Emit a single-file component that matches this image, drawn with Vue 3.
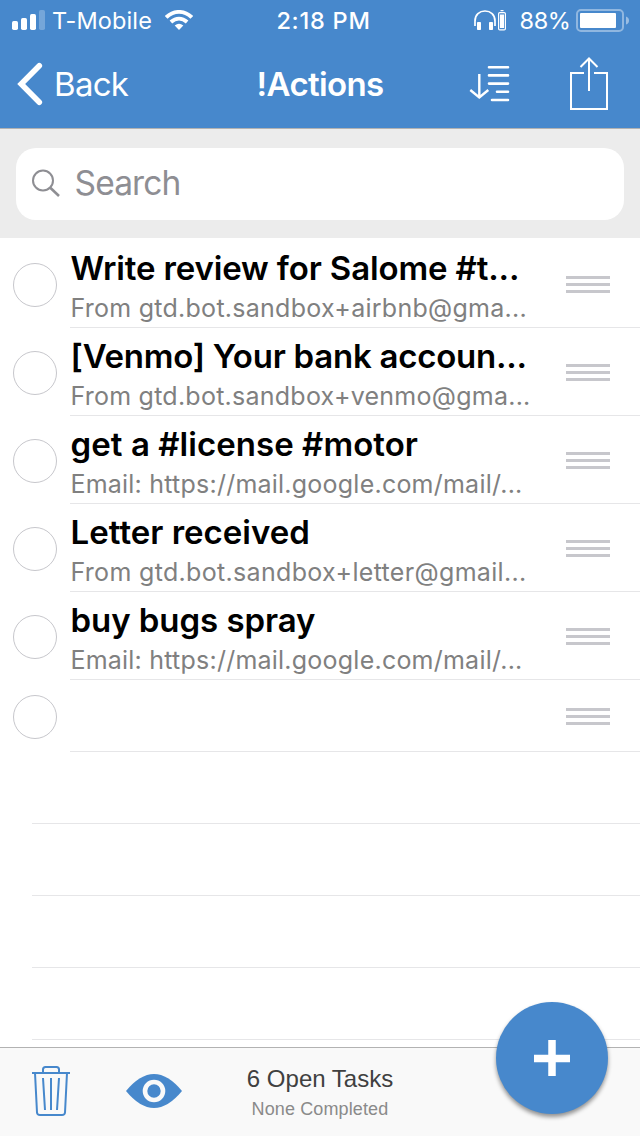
<script setup>
// ts and ns are the letter spacings of the title and the note, in pixels
const tasks = [
  { title: 'Write review for Salome #t...', note: 'From gtd.bot.sandbox+airbnb@gma...', ts: -0.14, ns: 0.27 },
  { title: '[Venmo] Your bank accoun...', note: 'From gtd.bot.sandbox+venmo@gma...', ts: -0.24, ns: 0.25 },
  { title: 'get a #license #motor', note: 'Email: https://mail.google.com/mail/...', ts: 0.05, ns: 0.23 },
  { title: 'Letter received', note: 'From gtd.bot.sandbox+letter@gmail...', ts: 0, ns: 0.33 },
  { title: 'buy bugs spray', note: 'Email: https://mail.google.com/mail/...', ts: -0.07, ns: 0.23 },
  { title: '', note: '', ts: 0, ns: 0 },
]
</script>

<template>
  <div class="screen">
    <header class="header">
      <div class="status">
        <div class="status-left">
          <svg class="signal" width="34" height="20" viewBox="0 0 34 20" fill="#fff">
            <rect x="0" y="11" width="6" height="9" rx="1.7" />
            <rect x="9" y="8" width="6" height="12" rx="1.7" />
            <rect x="18" y="4" width="6" height="16" rx="1.7" />
            <rect x="27" y="0" width="6" height="20" rx="1.7" opacity=".25" />
          </svg>
          <span class="carrier">T-Mobile</span>
          <svg class="wifi" width="28" height="20" viewBox="0 0 28 20" fill="none" stroke="#fff" stroke-width="3.9">
            <path d="M1.2 7.4Q7 1.9 14 1.9T26.8 7.4" />
            <path d="M5.900 12Q9.700 8.600 14 8.600T22.100 12" />
            <path d="M14 20L9.7 15.6Q14 11.9 18.3 15.6Z" fill="#fff" stroke="none" />
          </svg>
        </div>
        <span class="clock">2:18 PM</span>
        <div class="status-right">
          <svg class="phones" width="33" height="21" viewBox="0 0 33 21" fill="none" stroke="#fff">
            <path d="M1 16V11C1 4.500 5.500 1 11 1S21 4.500 21 11V16" stroke-width="1.700" />
            <rect x="3" y="12" width="4" height="8" rx=".8" fill="#fff" stroke="none" />
            <rect x="15" y="12" width="4" height="8" rx=".8" fill="#fff" stroke="none" />
            <rect x="24.600" y="2.600" width="6.800" height="17.300" rx="1.200" stroke-width="1.200" />
            <rect x="26" y="4.500" width="4" height="13.500" fill="#fff" stroke="none" />
            <path d="M26.500 .6H29.500" stroke-width="1.200" />
          </svg>
          <span class="percent">88%</span>
          <svg class="battery" width="54" height="24" viewBox="0 0 54 24">
            <rect x="1" y="1" width="46" height="21" rx="4" fill="none" stroke="#fff" stroke-opacity=".4" stroke-width="2" />
            <rect x="4" y="4" width="36" height="15" rx="1" fill="#fff" />
            <path d="M50 7.500Q53 8.500 53 11.500T50 15.500Z" fill="#fff" fill-opacity=".45" />
          </svg>
        </div>
      </div>
      <nav class="nav">
        <div class="back">
          <svg width="26" height="44" viewBox="0 0 26 44" fill="none" stroke="#fff" stroke-width="5.600" stroke-linecap="round" stroke-linejoin="miter">
            <path d="M22.300 3.800L4.200 22L22.300 40.200" />
          </svg>
          <span class="back-label">Back</span>
        </div>
        <h1 class="heading">!Actions</h1>
        <div class="actions">
          <svg width="42" height="40" viewBox="0 0 42 40" fill="none" stroke="#fff" stroke-width="2.600" stroke-linecap="round">
            <path d="M20 3.200H39M20 11.400H39M20 19.600H39M28 27.800H39M23 36H39" />
            <path d="M10.300 10V33M1.300 26L10.300 33.500L19.300 26" stroke-width="2.400" stroke-linecap="butt" />
          </svg>
          <svg class="share" width="40" height="56" viewBox="0 0 40 56" fill="none" stroke="#fff" stroke-width="2">
            <path d="M15 17H2V53H38V17H25" />
            <path d="M20 35V2.500M11.500 11L20 2.500L28.500 11" />
          </svg>
        </div>
      </nav>
    </header>

    <div class="search-area">
      <div class="search">
        <svg width="30" height="30" viewBox="0 0 30 30" fill="none" stroke="#8e8e93">
          <circle cx="12" cy="11.500" r="10" stroke-width="2" />
          <path d="M19 18.500L28 27" stroke-width="2.600" />
        </svg>
        <span class="placeholder">Search</span>
      </div>
    </div>

    <main class="list">
      <div v-for="(task, i) in tasks" :key="i" class="row" :class="{ blank: !task.title }">
        <span class="check"></span>
        <div class="body">
          <div class="copy">
            <div class="title"><span :style="{ letterSpacing: task.ts + 'px' }">{{ task.title }}</span></div>
            <div class="note"><span :style="{ letterSpacing: task.ns + 'px' }">{{ task.note }}</span></div>
          </div>
          <div class="grip"><i></i><i></i><i></i></div>
        </div>
      </div>
      <div v-for="n in 4" :key="'empty' + n" class="empty"></div>
    </main>

    <footer class="toolbar">
      <svg class="trash" width="38" height="51" viewBox="0 0 38 51" fill="none" stroke="#4788cc" stroke-width="2">
        <path d="M0 7H38M11 7V3.500Q11 1 13.500 1H24.500Q27 1 27 3.500V7" />
        <path d="M3 7L5 46.500Q5.200 49 8 49H30Q32.800 49 33 46.500L35 7" />
        <path d="M11 12L13 44M19 12V44M27 12L25 44" />
      </svg>
      <svg class="eye" width="56" height="34" viewBox="0 0 56 34">
        <path d="M0 17Q14 0 28 0T56 17Q42 34 28 34T0 17Z" fill="#4788cc" />
        <circle cx="28" cy="17" r="9" fill="#4788cc" stroke="#f9f9f9" stroke-width="4.600" />
      </svg>
      <div class="summary">
        <div class="open"><span>6 Open Tasks</span></div>
        <div class="completed"><span>None Completed</span></div>
      </div>
    </footer>
    <button class="add" aria-label="Add task">
      <svg width="36" height="36" viewBox="0 0 36 36" stroke="#fff" stroke-width="7.500"><path d="M0 18.500H36M18 0V36" /></svg>
    </button>
  </div>
</template>

<style>
body { margin: 0; }
</style>

<style scoped>
.screen { position: relative; width: 640px; height: 1136px; overflow: hidden; background: #fff; display: flex; flex-direction: column; font-family: Inter, "Liberation Sans", sans-serif; box-sizing: border-box; }
.header { height: 128px; background: #4788cc; border-bottom: 1px solid #b2b2b2; color: #fff; flex: none; }
.status { height: 40px; display: grid; grid-template-columns: 1fr auto 1fr; align-items: center; font-size: 23.500px; line-height: 38px; }
.status span { padding-top: 2px; }
.status-left { display: flex; align-items: center; padding-left: 12px; }
.carrier { margin-left: 6px; width: 106px; white-space: nowrap; letter-spacing: 0.120px; }
.wifi { margin-left: 7px; }
.status .clock { font-weight: 500; white-space: nowrap; padding-left: 7px; letter-spacing: 0.750px; }
.status-right { display: flex; align-items: center; justify-content: flex-end; padding-right: 10px; }
.percent { margin-left: 12.500px; width: 50.500px; white-space: nowrap; letter-spacing: -0.400px; }
.battery { margin: 2px 0 0 6px; }
.nav { height: 88px; display: grid; grid-template-columns: 1fr auto 1fr; align-items: center; }
.back { display: flex; align-items: center; padding-left: 17px; height: 88px; }
.back-label { margin-left: 11px; font-size: 33px; line-height: 40px; letter-spacing: -0.700px; }
.heading { margin: 0; font-size: 33px; line-height: 40px; font-weight: 600; letter-spacing: -0.650px; }
.actions { display: flex; align-items: center; justify-content: flex-end; padding-right: 31px; }
.share { margin-left: 58px; }
.search-area { height: 109px; flex: none; background: #ececec; padding: 19px 16px 18px; box-sizing: border-box; }
.search { height: 72px; background: #fff; border-radius: 20px; display: flex; align-items: center; padding-left: 15px; color: #8e8e93; }
.placeholder { margin-left: 13.500px; padding-bottom: 3px; font-size: 33.500px; line-height: 40px; letter-spacing: -0.850px; }
.list { flex: 1; min-height: 0; overflow: hidden; }
.row { height: 88px; display: flex; padding-left: 13px; }
.check { flex: none; width: 44px; height: 44px; margin-top: 25px; box-sizing: border-box; border: 1.300px solid #c7c7cc; border-radius: 50%; }
.body { flex: 1; margin-left: 13px; height: 90px; box-sizing: border-box; border-bottom: 1px solid #e6e6e8; display: flex; align-items: flex-start; padding-right: 30px; }
.copy { flex: 1; white-space: nowrap; }
.title { height: 40px; margin-top: 10px; padding-left: 0.600px; font-size: 33px; line-height: 40px; font-weight: 600; color: #000; }
.note { height: 32px; margin-top: 4px; padding-left: 0.400px; font-size: 25px; line-height: 32px; color: #808080; }
.grip { width: 44px; margin-top: 38px; display: grid; gap: 4px; }
.grip i { height: 3px; background: #c7c7cc; }
.row.blank { height: 74px; }
.row.blank .check { margin-top: 17px; }
.row.blank .body { height: 74px; }
.row.blank .grip { margin-top: 30px; }
.empty { height: 72px; margin-left: 32px; border-bottom: 1px solid #e6e6e8; box-sizing: border-box; }
.toolbar { height: 89px; flex: none; box-sizing: border-box; border-top: 1px solid #b2b2b2; background: #f9f9f9; display: flex; align-items: flex-start; padding-left: 32px; font-family: "Liberation Sans", Arial, sans-serif; }
.trash { margin-top: 18px; }
.eye { margin: 26px 0 0 56px; }
.summary { width: 276px; text-align: center; margin-top: 17px; white-space: nowrap; }
.open { font-size: 24px; line-height: 28px; color: #404040; }
.completed { font-size: 18px; line-height: 24px; margin-top: 4px; color: #8a8a8a; letter-spacing: 0.120px; }
.add { position: absolute; left: 496px; top: 1002px; width: 112px; height: 112px; border: 0; padding: 0; border-radius: 50%; background: #4788cc; box-shadow: 0 3px 4px rgba(0, 0, 0, .42); display: flex; align-items: center; justify-content: center; }
</style>
